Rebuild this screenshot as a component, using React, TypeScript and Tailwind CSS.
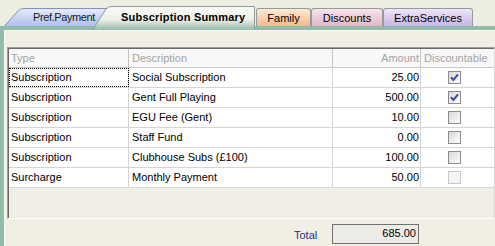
import React from "react";

type Row = { type: string; desc: string; amount: string; checked: boolean; disabled?: boolean };

const rows: Row[] = [
  { type: "Subscription", desc: "Social Subscription", amount: "25.00", checked: true },
  { type: "Subscription", desc: "Gent Full Playing", amount: "500.00", checked: true },
  { type: "Subscription", desc: "EGU Fee (Gent)", amount: "10.00", checked: false },
  { type: "Subscription", desc: "Staff Fund", amount: "0.00", checked: false },
  { type: "Subscription", desc: "Clubhouse Subs (£100)", amount: "100.00", checked: false },
  { type: "Surcharge", desc: "Monthly Payment", amount: "50.00", checked: false, disabled: true },
];

function CheckBox({ checked, disabled }: { checked: boolean; disabled?: boolean }) {
  return (
    <span
      className={
        disabled
          ? "w-[13px] h-[13px] border border-[#C8C8C8] bg-[#F5F5F3] flex items-center justify-center"
          : "w-[13px] h-[13px] border border-[#8C8C8C] bg-[linear-gradient(135deg,#D9D9D4,#FFFFFF)] flex items-center justify-center"
      }
    >
      {checked && (
        <svg width="11" height="11" viewBox="0 0 11 11">
          <path d="M2 5.3 L4.4 7.9 L9 2.4" fill="none" stroke="#3D4C9E" strokeWidth="2" />
        </svg>
      )}
    </span>
  );
}

function SlantTab({
  width,
  height,
  gradId,
  stops,
  stroke,
  children,
  className,
}: {
  width: number;
  height: number;
  gradId: string;
  stops: [string, string][];
  stroke: string;
  children: React.ReactNode;
  className: string;
}) {
  const w = width - 0.5;
  const fillPath = `M0.5,${height} L14,3 Q16,0.5 20,0.5 L${w},0.5 L${w},${height} Z`;
  const strokePath = `M0.5,${height} L14,3 Q16,0.5 20,0.5 L${w},0.5 L${w},${height}`;
  return (
    <div className={className}>
      <svg
        className="absolute inset-0"
        width={width}
        height={height}
        viewBox={`0 0 ${width} ${height}`}
      >
        <defs>
          <linearGradient id={gradId} x1="0" y1="0" x2="0" y2="1">
            {stops.map(([off, col]) => (
              <stop key={off} offset={off} stopColor={col} />
            ))}
          </linearGradient>
        </defs>
        <path d={fillPath} fill={`url(#${gradId})`} />
        <path d={strokePath} fill="none" stroke={stroke} strokeWidth="1" />
      </svg>
      <div className="relative">{children}</div>
    </div>
  );
}

export default function App() {
  return (
    <div className="w-[495px] h-[246px] overflow-hidden flex flex-col bg-[#F1EFE3] text-[11px] text-black font-['Liberation_Sans',Arial,sans-serif]">
      {/* Tab strip */}
      <div className="h-[30px] shrink-0 flex items-end pl-[4px] bg-[linear-gradient(to_bottom,#EEEDE1_26px,#93BBAB_26px)]">
        <SlantTab
          className="relative w-[104px] h-[18px] mb-[4px]"
          width={104}
          height={18}
          gradId="gPref"
          stops={[
            ["0", "#E6ECFA"],
            ["1", "#AFC0EB"],
          ]}
          stroke="#8193B8"
        >
          <div className="pl-[29px] leading-[18px] tracking-[-0.4px] text-[#1a1a1a]">Pref.Payment</div>
        </SlantTab>
        <SlantTab
          className="relative z-10 w-[163px] h-[24px] ml-[-16px]"
          width={163}
          height={24}
          gradId="gSel"
          stops={[
            ["0", "#FBFBF8"],
            ["0.55", "#EEF0E6"],
            ["1", "#93BBAB"],
          ]}
          stroke="#929C9C"
        >
          <div className="pl-[29px] pt-[4px] leading-[14px] font-bold tracking-[0.2px]">Subscription Summary</div>
        </SlantTab>
        <div className="ml-[1px] w-[55px] h-[18px] mb-[4px] rounded-t-[3px] border border-b-0 border-[#929C9C] bg-[linear-gradient(to_bottom,#FDE9D6,#F5B98C)] flex items-center justify-center leading-[16px]">
          Family
        </div>
        <div className="w-[72px] h-[18px] mb-[4px] rounded-t-[3px] border border-b-0 border-[#929C9C] bg-[linear-gradient(to_bottom,#F8E4EA,#E1B7C6)] flex items-center justify-center leading-[16px]">
          Discounts
        </div>
        <div className="w-[90px] h-[18px] mb-[4px] rounded-t-[3px] border border-b-0 border-[#929C9C] bg-[linear-gradient(to_bottom,#EEE6F8,#C7B5E6)] flex items-center justify-center leading-[16px]">
          ExtraServices
        </div>
      </div>

      {/* Body */}
      <div className="flex-1 flex min-h-0">
        <div className="w-[4px] shrink-0 bg-[#93BBAB]" />
        <div className="flex-1 flex flex-col border-t border-l border-[#FBF9EF] bg-[#F1EFE3]">
          <div className="h-[16px] shrink-0" />
          {/* Grid */}
          <div className="ml-[2px] h-[172px] shrink-0 border-t border-l border-[#A0A0A0] border-b border-b-white border-r border-r-[#D8D8D8] bg-[#F0EEE5]">
            <div className="h-full border-t border-l border-[#6A6A6A] flex flex-col">
              {/* Header */}
              <div className="h-[19px] flex border-b border-[#C8C8C8] bg-[#F8F8F8] text-[#A3A3A3] leading-[18px]">
                <div className="w-[120px] border-r border-[#C4C4C4] pl-[2px]">Type</div>
                <div className="w-[204px] border-r border-[#C4C4C4] pl-[3px]">Description</div>
                <div className="w-[88px] border-r border-[#C4C4C4] pr-[1px] text-right">Amount</div>
                <div className="flex-1 pl-[3px] whitespace-nowrap overflow-hidden">Discountable</div>
              </div>
              {rows.map((r, i) => (
                <div key={i} className="h-[20px] flex border-b border-[#D5D5D5] bg-white leading-[19px]">
                  <div
                    className={
                      i === 0
                        ? "w-[120px] border-r border-[#D5D5D5] pl-[2px] [outline:1px_dotted_#000] [outline-offset:-1px]"
                        : "w-[120px] border-r border-[#D5D5D5] pl-[2px]"
                    }
                  >
                    {r.type}
                  </div>
                  <div className="w-[204px] border-r border-[#D5D5D5] pl-[3px]">{r.desc}</div>
                  <div className="w-[88px] border-r border-[#D5D5D5] pr-[1px] text-right">{r.amount}</div>
                  <div className="flex-1 flex items-center pl-[27px]">
                    <CheckBox checked={r.checked} disabled={r.disabled} />
                  </div>
                </div>
              ))}
            </div>
          </div>
          {/* Total */}
          <div className="flex items-start pt-[5px] pl-[289px]">
            <div className="w-[38px] pt-[4px] leading-[14px] text-[#1F2F8F]">Total</div>
            <div className="w-[87px] h-[20px] border border-[#727272] bg-[#ECEBE6] text-right pr-[2px] pt-[1px] leading-[14px]">
              685.00
            </div>
          </div>
        </div>
      </div>
    </div>
  );
}
